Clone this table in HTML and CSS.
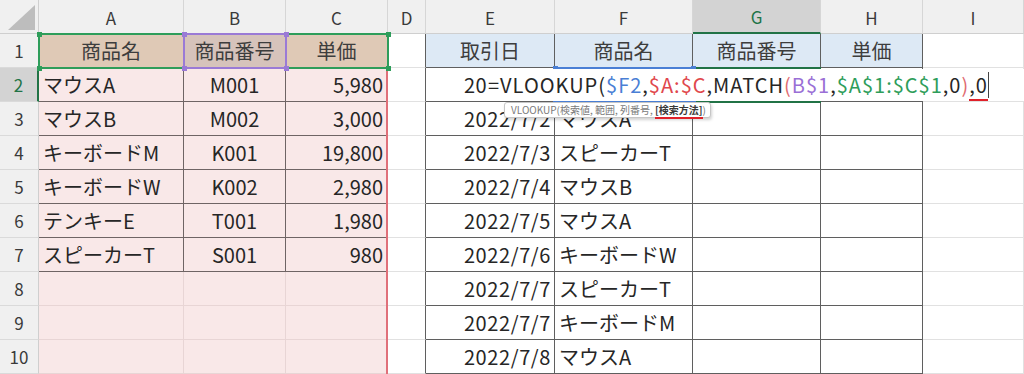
FILE: index.html
```html
<!DOCTYPE html>
<html lang="ja">
<head>
<meta charset="utf-8">
<title>VLOOKUP MATCH</title>
<link rel="stylesheet" href="styles.css">
</head>
<body>
<div class="sheet">
  <div class="grid">
    <!-- header row -->
    <div class="corner"><span class="tri"></span></div>
    <div class="ch">A</div><div class="ch">B</div><div class="ch">C</div><div class="ch">D</div>
    <div class="ch">E</div><div class="ch">F</div><div class="ch sel">G</div><div class="ch">H</div><div class="ch">I</div>

    <!-- row 1 -->
    <div class="rh">1</div>
    <div class="c tan dk ctr">商品名</div><div class="c tanb dk ctr">商品番号</div><div class="c tan dk ctr">単価</div>
    <div class="c eL"></div>
    <div class="c blu tb ctr">取引日</div><div class="c blu tb ctr">商品名</div><div class="c blu tb ctr">商品番号</div><div class="c blu tb ctr">単価</div>
    <div class="c"></div>

    <!-- row 2 -->
    <div class="rh sel">2</div>
    <div class="c pk dk l">マウスA</div><div class="c pk dk ctr">M001</div><div class="c pk dk r">5,980</div>
    <div class="c eL"></div>
    <div class="c tb r dt">2022/7/1</div><div class="c tb"></div><div class="c tb"></div><div class="c tb"></div>
    <div class="c"></div>

    <!-- row 3 -->
    <div class="rh">3</div>
    <div class="c pk dk l">マウスB</div><div class="c pk dk ctr">M002</div><div class="c pk dk r">3,000</div>
    <div class="c eL"></div>
    <div class="c tb r dt">2022/7/2</div><div class="c tb l">マウスA</div><div class="c tb"></div><div class="c tb"></div>
    <div class="c"></div>

    <!-- row 4 -->
    <div class="rh">4</div>
    <div class="c pk dk l">キーボードM</div><div class="c pk dk ctr">K001</div><div class="c pk dk r">19,800</div>
    <div class="c eL"></div>
    <div class="c tb r dt">2022/7/3</div><div class="c tb l">スピーカーT</div><div class="c tb"></div><div class="c tb"></div>
    <div class="c"></div>

    <!-- row 5 -->
    <div class="rh">5</div>
    <div class="c pk dk l">キーボードW</div><div class="c pk dk ctr">K002</div><div class="c pk dk r">2,980</div>
    <div class="c eL"></div>
    <div class="c tb r dt">2022/7/4</div><div class="c tb l">マウスB</div><div class="c tb"></div><div class="c tb"></div>
    <div class="c"></div>

    <!-- row 6 -->
    <div class="rh">6</div>
    <div class="c pk dk l">テンキーE</div><div class="c pk dk ctr">T001</div><div class="c pk dk r">1,980</div>
    <div class="c eL"></div>
    <div class="c tb r dt">2022/7/5</div><div class="c tb l">マウスA</div><div class="c tb"></div><div class="c tb"></div>
    <div class="c"></div>

    <!-- row 7 -->
    <div class="rh">7</div>
    <div class="c pk dk l">スピーカーT</div><div class="c pk dk ctr">S001</div><div class="c pk dk r">980</div>
    <div class="c eL"></div>
    <div class="c tb r dt">2022/7/6</div><div class="c tb l">キーボードW</div><div class="c tb"></div><div class="c tb"></div>
    <div class="c"></div>

    <!-- row 8 -->
    <div class="rh">8</div>
    <div class="c pk lt"></div><div class="c pk lt"></div><div class="c pk lt"></div>
    <div class="c eL"></div>
    <div class="c tb r dt">2022/7/7</div><div class="c tb l">スピーカーT</div><div class="c tb"></div><div class="c tb"></div>
    <div class="c"></div>

    <!-- row 9 -->
    <div class="rh">9</div>
    <div class="c pk lt"></div><div class="c pk lt"></div><div class="c pk lt"></div>
    <div class="c eL"></div>
    <div class="c tb r dt">2022/7/7</div><div class="c tb l">キーボードM</div><div class="c tb"></div><div class="c tb"></div>
    <div class="c"></div>

    <!-- row 10 -->
    <div class="rh">10</div>
    <div class="c pk lt"></div><div class="c pk lt"></div><div class="c pk lt"></div>
    <div class="c eL"></div>
    <div class="c tb r dt">2022/7/8</div><div class="c tb l">マウスA</div><div class="c tb"></div><div class="c tb"></div>
    <div class="c"></div>
  </div>

  <!-- range highlights -->
  <div class="rng rng-green"></div>
  <div class="rng rng-purple"></div>
  <div class="rng-red"></div>
  <div class="rng rng-blue"></div>
  <div class="active-top"></div>
  <div class="active-bot"></div>

  <span class="hd g1"></span><span class="hd g2"></span><span class="hd g3"></span><span class="hd g4"></span>
  <span class="hd p1"></span><span class="hd p2"></span><span class="hd p3"></span><span class="hd p4"></span>
  <span class="hd b1"></span><span class="hd b2"></span><span class="hd b3"></span><span class="hd b4"></span>

  <!-- in-cell editor -->
  <div class="editor"><span>=VLOOKUP(</span><span class="f-blue">$F2</span><span>,</span><span class="f-red">$A:$C</span><span>,MATCH</span><span class="f-paren">(</span><span class="f-purple">B$1</span><span>,</span><span class="f-green">$A$1:$C$1</span><span>,0</span><span class="f-paren">)</span><span class="last">,0</span><span class="caret"></span></div>

  <!-- function tooltip -->
  <div class="tip">VLOOKUP(検索値, 範囲, 列番号, <b>[検索方法]</b>)</div>
</div>
</body>
</html>
```
FILE: styles.css
```css
* { box-sizing: border-box; }
html, body { margin: 0; padding: 0; background: #fff; }
body {
  font-family: "Noto Sans CJK JP", "Noto Sans", sans-serif;
  color: #262626;
  width: 1024px;
  height: 374px;
  overflow: hidden;
}
.sheet { position: relative; width: 1024px; height: 374px; }
.grid {
  display: grid;
  grid-template-columns: 39px 145px 102px 102px 38px 129px 138px 128px 102px 101px;
  grid-template-rows: repeat(11, 34px);
}

/* headers */
.corner {
  position: relative;
  background: #f0f0f0;
  border-right: 1px solid #cfcfcf;
  border-bottom: 1px solid #cfcfcf;
}
.tri {
  position: absolute;
  right: 3px; bottom: 3px;
  width: 0; height: 0;
  border-left: 27px solid transparent;
  border-bottom: 25px solid #bdbdbd;
}
.ch {
  background: #f0f0f0;
  border-right: 1px solid #d6d6d6;
  border-bottom: 1px solid #cfcfcf;
  display: flex; align-items: center; justify-content: center;
  font-size: 17px;
  color: #3a3a3a;
  padding-top: 1px;
}
.ch.sel {
  background: #d3d3d3;
  color: #217346;
  border-bottom: 2px solid #217346;
}
.rh {
  background: #f0f0f0;
  border-right: 1px solid #cfcfcf;
  border-bottom: 1px solid #dadada;
  display: flex; align-items: center; justify-content: center;
  font-size: 17px;
  color: #3a3a3a;
}
.rh.sel {
  background: #d3d3d3;
  color: #217346;
  border-right: 2px solid #217346;
}

/* cells */
.c {
  border-right: 1px solid #e1e1e1;
  border-bottom: 1px solid #e1e1e1;
  display: flex; align-items: center;
  font-size: 20px;
  white-space: nowrap;
  overflow: hidden;
  line-height: 1;
}
.l { justify-content: flex-start; padding-left: 4px; }
.r { justify-content: flex-end; padding-right: 4px; }
.ctr { justify-content: center; }
.dt { letter-spacing: 0.6px; padding-right: 3px; }

.tan { background: #dfc9b6; color: #3d3d3d; }
.tanb { background: #d6c3bb; color: #3d3d3d; }
.pk { background: #f9e8e8; }
.dk { border-right-color: #6f6464; border-bottom-color: #6f6464; }
.lt { border-right-color: #e8d5d5; border-bottom-color: #e8d5d5; }
.blu { background: #dde9f5; color: #3d3d3d; }
.tb { border-right-color: #5f5f5f; border-bottom-color: #5f5f5f; }
.eL { border-right-color: #5f5f5f; }

/* reference-range highlights */
.rng { position: absolute; border: 2px solid; pointer-events: none; }
.rng-green { left: 38px; top: 33px; width: 351px; height: 36px; border-color: #2e9d5a; }
.rng-purple { left: 183px; top: 33px; width: 104px; height: 36px; border-color: #9a7ad6; }
.rng-red { position: absolute; left: 386px; top: 68px; width: 2px; height: 306px; background: #e0707a; }
.rng-blue { left: 554px; top: 67px; width: 140px; height: 36px; border-color: #4a7fd5; border-left: none; border-right: none; }
.active-top { position: absolute; left: 693px; top: 67px; width: 128px; height: 2px; background: #217346; }
.active-bot { position: absolute; left: 693px; top: 101px; width: 128px; height: 2px; background: #217346; }

.hd { position: absolute; width: 5px; height: 5px; }
.g1 { left: 37px; top: 32px; background: #2e9d5a; }
.g2 { left: 386px; top: 32px; background: #2e9d5a; }
.g3 { left: 37px; top: 66px; background: #2e9d5a; }
.g4 { left: 386px; top: 66px; background: #2e9d5a; }
.p1 { left: 182px; top: 32px; background: #9a7ad6; }
.p2 { left: 284px; top: 32px; background: #9a7ad6; }
.p3 { left: 182px; top: 66px; background: #9a7ad6; }
.p4 { left: 284px; top: 66px; background: #9a7ad6; }
.b1 { left: 553px; top: 66px; background: #4a7fd5; }
.b2 { left: 691px; top: 66px; background: #4a7fd5; }
.b3 { left: 553px; top: 100px; background: #4a7fd5; }
.b4 { left: 691px; top: 100px; background: #4a7fd5; }

/* in-cell editor */
.editor {
  position: absolute;
  left: 487px; top: 69px;
  width: 537px; height: 32px;
  background: #fff;
  display: flex; align-items: center;
  font-size: 20px;
  line-height: 1;
  white-space: nowrap;
  color: #262626;
  padding-left: 1px;
  letter-spacing: 1px;
}
.editor .f-blue { color: #4a7fd5; }
.editor .f-red { color: #e0474c; }
.editor .f-purple { color: #9a6fd6; }
.editor .f-green { color: #2e9d5a; }
.editor .f-paren { color: #e06a70; }
.editor .last { position: relative; }
.editor .last::after {
  content: "";
  position: absolute;
  left: 0; right: 0; bottom: -6px;
  height: 2px;
  background: #e0212a;
}
.caret { display: inline-block; width: 1px; height: 26px; background: #444; margin-left: 0; }

/* tooltip */
.tip {
  position: absolute;
  left: 504px; top: 102px;
  height: 16px;
  padding: 0 4px 0 6px;
  background: #fff;
  border: 1px solid #c6c6c6;
  border-radius: 3px;
  box-shadow: 1px 2px 3px rgba(0,0,0,0.18);
  font-family: "Noto Sans CJK JP", "Noto Sans", sans-serif;
  font-size: 10px;
  line-height: 14px;
  color: #7a7a7a;
  white-space: nowrap;
}
.tip b {
  color: #3a3a3a;
  font-weight: 700;
  border-bottom: 2px solid #e0212a;
}
```
